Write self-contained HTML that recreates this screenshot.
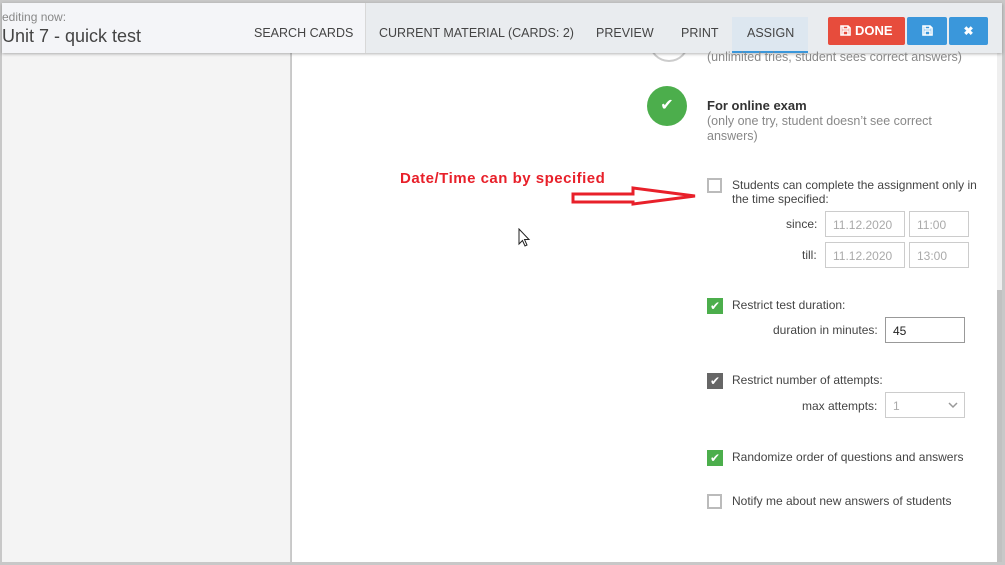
<!DOCTYPE html>
<html><head><meta charset="utf-8"><style>
*{margin:0;padding:0;box-sizing:border-box}
body{width:1005px;height:565px;overflow:hidden;background:#c8c8c8;font-family:"Liberation Sans",Arial,sans-serif;position:relative;color:#444}
.abs{position:absolute}
#left{left:2px;top:3px;width:289px;height:559px;background:#f4f4f4;border-right:1px solid #ccc}
#main{left:292px;top:3px;width:705px;height:559px;background:#fff}
#track{left:997px;top:3px;width:5px;height:559px;background:#efefef}
#thumb{left:997px;top:290px;width:5px;height:272px;background:#c1c1c1}
#hdr{left:2px;top:3px;width:1000px;height:50px;background:#f4f5f8;box-shadow:0 1px 3px rgba(0,0,0,.3)}
#hdr2{left:365px;top:3px;width:637px;height:50px;background:#e9ecef;border-left:1px solid #d8d8d8}
.tab{font-size:12.5px;color:#444;top:26px}
.t{font-size:12px;color:#444}
.g{color:#888}
.cb{width:15px;height:15px;border:2px solid #bbb;background:#fff}
.cbc{width:16px;height:16px;background:#4cae4c}
.inp{border:1px solid #ccc;height:26px;font-size:12px;color:#aaa;padding:6px 0 0 7px}
.btn{top:17px;height:28px;border-radius:2px;color:#fff;font-weight:bold;font-size:13px;text-align:center;line-height:28px}
</style></head><body>
<div class="abs" id="left"></div>
<div class="abs" id="main"></div>
<div class="abs" id="track"></div>
<div class="abs" id="thumb"></div>
<div class="abs" style="left:649px;top:40px;width:40px;height:22px;border:2px solid #ccc;border-top:none;border-radius:0 0 20px 20px"></div>
<div class="abs" id="hdr"></div>
<div class="abs" id="hdr2"></div>
<div class="abs" style="left:2px;top:10px;font-size:12px;color:#888">editing now:</div>
<div class="abs" style="left:2px;top:26px;font-size:18px;color:#444">Unit 7 - quick test</div>
<div class="abs tab" style="left:254px">SEARCH CARDS</div>
<div class="abs tab" style="left:379px">CURRENT MATERIAL (CARDS: 2)</div>
<div class="abs tab" style="left:596px">PREVIEW</div>
<div class="abs tab" style="left:681px">PRINT</div>
<div class="abs" style="left:732px;top:17px;width:76px;height:36px;background:#dde7f0;border-bottom:2px solid #3a97db"></div>
<div class="abs tab" style="left:747px">ASSIGN</div>
<div class="abs btn" style="left:828px;width:77px;background:#e74c3c"><svg width="11" height="11" viewBox="0 0 11 11" style="vertical-align:-1px"><path d="M1 1H8L10 3V10H1Z M3 1V4H8V1 M3 6H8V10H3Z" fill="none" stroke="#fff" stroke-width="1.6"/></svg> DONE</div>
<div class="abs btn" style="left:907px;width:40px;background:#3a97db"><svg width="11" height="11" viewBox="0 0 11 11" style="vertical-align:-1px"><path d="M1 1H8L10 3V10H1Z M3 1V4H8V1 M3 6H8V10H3Z" fill="none" stroke="#fff" stroke-width="1.6"/></svg></div>
<div class="abs btn" style="left:949px;width:39px;background:#3a97db;font-size:12px">✖</div>
<div class="abs t g" style="left:707px;top:50px;font-size:12.5px">(unlimited tries, student sees correct answers)</div>
<div class="abs" style="left:647px;top:86px;width:40px;height:40px;border-radius:50%;background:#4cae4c;color:#fff;text-align:center;line-height:40px;font-size:16px">✔</div>
<div class="abs" style="left:707px;top:98px;font-size:13px;font-weight:bold;color:#333">For online exam</div>
<div class="abs g" style="left:707px;top:114px;font-size:12.5px;line-height:15px;width:260px">(only one try, student doesn’t see correct answers)</div>
<div class="abs" style="left:400px;top:170px;font-size:15px;font-weight:bold;color:#e8202a;letter-spacing:0.5px">Date/Time can by specified</div>
<svg class="abs" style="left:570px;top:185px" width="130" height="25"><path d="M3 9 L63 9 L63 3 L125 11 L63 19 L63 17 L3 17 Z" fill="none" stroke="#e8202a" stroke-width="3"/></svg>
<svg class="abs" style="left:518px;top:228px" width="14" height="20"><path d="M1 1 L1 16 L4.5 12.5 L7 18 L9 17 L6.5 11.5 L11 11.5 Z" fill="#fff" stroke="#222"/></svg>
<div class="abs cb" style="left:707px;top:178px"></div>
<div class="abs t" style="left:732px;top:178px;line-height:14px;width:250px">Students can complete the assignment only in the time specified:</div>
<div class="abs t" style="left:786px;top:217px">since:</div>
<div class="abs inp" style="left:825px;top:211px;width:80px">11.12.2020</div>
<div class="abs inp" style="left:909px;top:211px;width:60px">11:00</div>
<div class="abs t" style="left:802px;top:248px">till:</div>
<div class="abs inp" style="left:825px;top:242px;width:80px">11.12.2020</div>
<div class="abs inp" style="left:909px;top:242px;width:60px">13:00</div>
<div class="abs cbc" style="left:707px;top:298px;color:#fff;font-size:12px;text-align:center;line-height:16px">✔</div>
<div class="abs t" style="left:732px;top:298px">Restrict test duration:</div>
<div class="abs t" style="left:773px;top:323px">duration in minutes:</div>
<div class="abs inp" style="left:885px;top:317px;width:80px;border-color:#999;color:#222">45</div>
<div class="abs" style="left:707px;top:373px;width:16px;height:16px;background:#666;color:#fff;font-size:12px;text-align:center;line-height:16px">✔</div>
<div class="abs t" style="left:732px;top:373px">Restrict number of attempts:</div>
<div class="abs t" style="left:802px;top:399px">max attempts:</div>
<div class="abs inp" style="left:885px;top:392px;width:80px">1<svg style="position:absolute;right:6px;top:9px" width="10" height="7"><path d="M1 1L5 5L9 1" fill="none" stroke="#999" stroke-width="1.5"/></svg></div>
<div class="abs cbc" style="left:707px;top:450px;color:#fff;font-size:12px;text-align:center;line-height:16px">✔</div>
<div class="abs t" style="left:732px;top:450px">Randomize order of questions and answers</div>
<div class="abs cb" style="left:707px;top:494px"></div>
<div class="abs t" style="left:732px;top:494px">Notify me about new answers of students</div>
</body></html>
